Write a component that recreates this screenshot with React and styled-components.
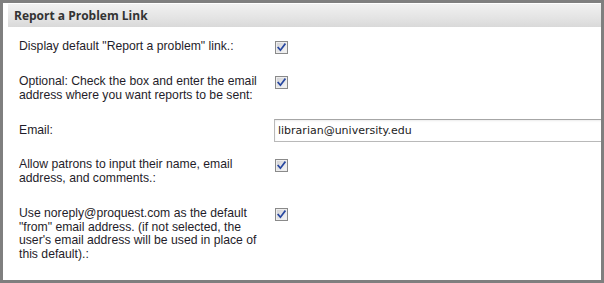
import React from "react";
import styled, { createGlobalStyle } from "styled-components";

const Global = createGlobalStyle`
  html, body { margin: 0; padding: 0; background: #fff; }
  * { box-sizing: border-box; }
`;

const Frame = styled.div`
  width: 604px;
  height: 283px;
  border: 3px solid #7f7f7f;
  background: #fff;
  overflow: hidden;
  padding: 1px 0 0 5px;
`;

const Header = styled.div`
  height: 23px;
  width: 700px;
  background: linear-gradient(to bottom, #f1f1f1 0%, #e4e4e4 60%, #d9d9d9 100%);
  display: flex;
  align-items: center;
  padding-left: 6px;
  font-family: "Open Sans", "DejaVu Sans", sans-serif;
  font-weight: 700;
  font-size: 12px;
  color: #333;
`;

const Body = styled.div`
  padding-left: 11px;
  display: flex;
  flex-direction: column;
`;

const Row = styled.div`
  display: flex;
  align-items: ${(p) => (p.$center ? "center" : "flex-start")};
  margin-top: ${(p) => p.$top}px;
`;

const Label = styled.div`
  width: 256px;
  padding-right: 11px;
  flex: none;
  font-family: "Liberation Sans", Arial, sans-serif;
  font-size: 12.2px;
  line-height: 13.5px;
  color: #1f1d2a;
`;

const Box = styled.span`
  flex: none;
  width: 13px;
  height: 13px;
  margin-top: 1px;
  border: 1px solid #8a8a8a;
  background: linear-gradient(135deg, #cfcfd2 0%, #e6e6e8 55%, #f7f7f7 100%);
  box-shadow: inset 0 0 0 1px #eeeeee;
  display: flex;
  align-items: center;
  justify-content: center;
`;

const TextInput = styled.input`
  flex: none;
  width: 360px;
  height: 23px;
  border: 1px solid #b9b9b9;
  border-top-color: #a6a6a6;
  box-shadow: inset 0 1px 2px rgba(0, 0, 0, 0.08);
  padding: 0 0 0 3px;
  margin: 0 0 0 -1px;
  font-family: "DejaVu Sans", Tahoma, sans-serif;
  font-size: 11px;
  color: #222;
  background: #fff;
  outline: none;
`;

function Check() {
  return (
    <Box>
      <svg width="9" height="9" viewBox="0 0 9 9">
        <path
          d="M1.2 4.6 L3.4 7.2 L7.9 1.2"
          fill="none"
          stroke="#2747a0"
          strokeWidth="1.7"
          strokeLinecap="square"
          strokeLinejoin="miter"
        />
      </svg>
    </Box>
  );
}

const rows = [
  { top: 13, label: 'Display default "Report a problem" link.:' },
  { top: 21, label: "Optional: Check the box and enter the email address where you want reports to be sent:" },
  { top: 17, label: "Email:", input: "librarian@university.edu" },
  { top: 16, label: "Allow patrons to input their name, email address, and comments.:" },
  {
    top: 22,
    label:
      'Use noreply@proquest.com as the default "from" email address. (if not selected, the user\'s email address will be used in place of this default).:',
  },
];

export default function App() {
  return (
    <>
      <Global />
      <Frame>
        <Header>Report a Problem Link</Header>
        <Body>
          {rows.map((r, i) =>
            r.input ? (
              <Row key={i} $top={r.top} $center>
                <Label>{r.label}</Label>
                <TextInput defaultValue={r.input} />
              </Row>
            ) : (
              <Row key={i} $top={r.top}>
                <Label>{r.label}</Label>
                <Check />
              </Row>
            )
          )}
        </Body>
      </Frame>
    </>
  );
}
